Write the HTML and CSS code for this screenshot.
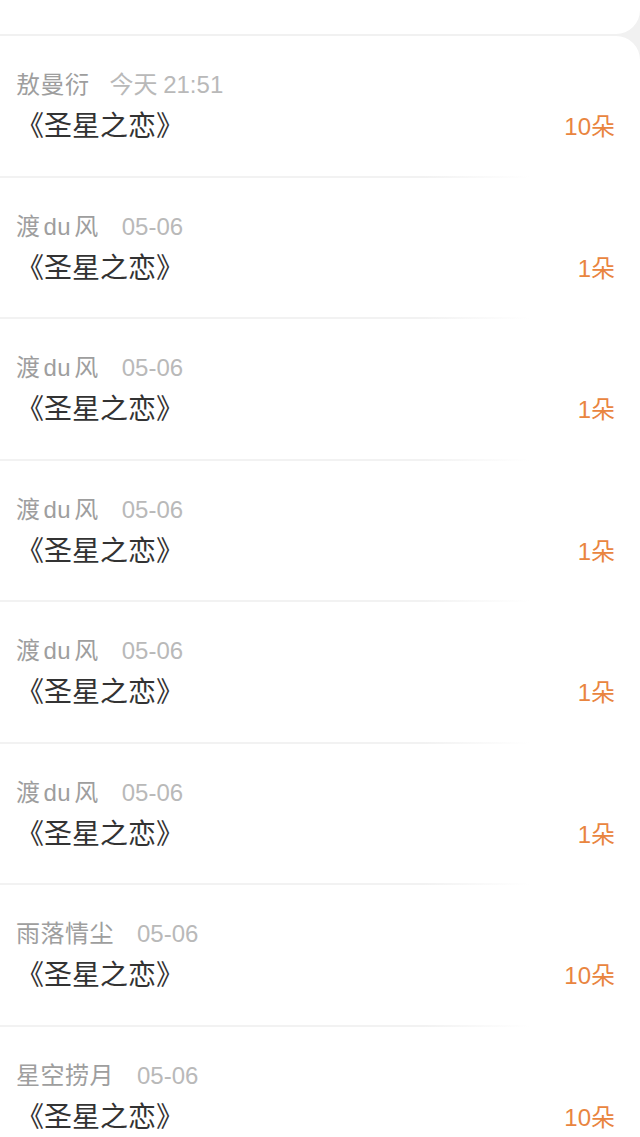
FILE: index.html
```html
<!DOCTYPE html>
<html lang="zh-CN">
<head>
    <meta charset="UTF-8">
    <meta name="viewport" content="width=device-width, initial-scale=1.0">
    <title>送花记录</title>
    <link rel="stylesheet" href="styles.css">
</head>
<body>
    <div class="top-card"></div>
    <main class="list">
        <div class="item">
            <div class="info">
                <p class="meta"><span class="name">敖曼衍</span><span class="time">今天 21:51</span></p>
                <p class="title"><span class="bk">《</span>圣星之恋<span class="bk">》</span></p>
            </div>
            <span class="count">10朵</span>
        </div>
        <div class="item">
            <div class="info">
                <p class="meta"><span class="name">渡du风</span><span class="time">05-06</span></p>
                <p class="title"><span class="bk">《</span>圣星之恋<span class="bk">》</span></p>
            </div>
            <span class="count">1朵</span>
        </div>
        <div class="item">
            <div class="info">
                <p class="meta"><span class="name">渡du风</span><span class="time">05-06</span></p>
                <p class="title"><span class="bk">《</span>圣星之恋<span class="bk">》</span></p>
            </div>
            <span class="count">1朵</span>
        </div>
        <div class="item">
            <div class="info">
                <p class="meta"><span class="name">渡du风</span><span class="time">05-06</span></p>
                <p class="title"><span class="bk">《</span>圣星之恋<span class="bk">》</span></p>
            </div>
            <span class="count">1朵</span>
        </div>
        <div class="item">
            <div class="info">
                <p class="meta"><span class="name">渡du风</span><span class="time">05-06</span></p>
                <p class="title"><span class="bk">《</span>圣星之恋<span class="bk">》</span></p>
            </div>
            <span class="count">1朵</span>
        </div>
        <div class="item">
            <div class="info">
                <p class="meta"><span class="name">渡du风</span><span class="time">05-06</span></p>
                <p class="title"><span class="bk">《</span>圣星之恋<span class="bk">》</span></p>
            </div>
            <span class="count">1朵</span>
        </div>
        <div class="item">
            <div class="info">
                <p class="meta"><span class="name">雨落情尘</span><span class="time">05-06</span></p>
                <p class="title"><span class="bk">《</span>圣星之恋<span class="bk">》</span></p>
            </div>
            <span class="count">10朵</span>
        </div>
        <div class="item">
            <div class="info">
                <p class="meta"><span class="name">星空捞月</span><span class="time">05-06</span></p>
                <p class="title"><span class="bk">《</span>圣星之恋<span class="bk">》</span></p>
            </div>
            <span class="count">10朵</span>
        </div>
    </main>
</body>
</html>
```

FILE: styles.css
```css
body {
    margin: 0;
    background: #f1f1f1;
    font-family: "Liberation Sans", "Noto Sans CJK SC", sans-serif;
    overflow: hidden;
}
p {
    margin: 0;
}
.top-card {
    height: 34px;
    background: #fff;
    border-bottom-right-radius: 24px;
}
.list {
    margin-top: 2px;
    background: #fff;
    border-top-right-radius: 24px;
}
.item {
    position: relative;
    display: flex;
    justify-content: space-between;
    height: 141.5px;
    box-sizing: border-box;
    padding: 34px 25px 0 16px;
}
.item::after {
    content: "";
    position: absolute;
    left: 0;
    bottom: 0;
    width: 530px;
    height: 2px;
    background: linear-gradient(to right, #f2f2f2 80%, #fff);
}
.meta {
    font-size: 24px;
    line-height: 30px;
    color: #9e9e9e;
    text-autospace: normal;
}
.name {
    letter-spacing: 0.5px;
}
.time {
    margin-left: 20px;
    color: #b9b9b9;
    word-spacing: -1px;
}
.title {
    margin-top: 6px;
    font-family: "Noto Sans CJK SC", sans-serif;
    font-size: 28px;
    line-height: 36px;
    color: #333;
    text-spacing-trim: space-all;
}
.bk {
    font-family: "Noto Sans CJK TC", sans-serif;
}
.count {
    margin-top: 39px;
    font-size: 24px;
    line-height: 36px;
    color: #e9853f;
}
```
